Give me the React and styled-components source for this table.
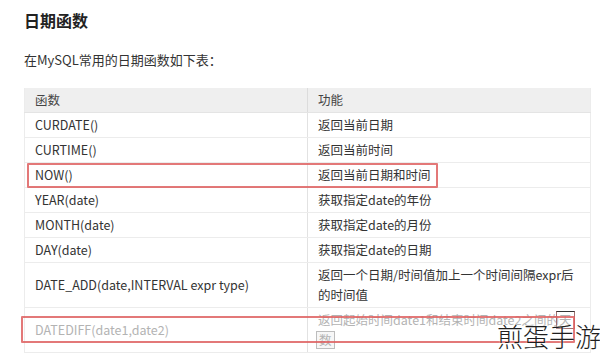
import React from "react"
import styled, { createGlobalStyle } from "styled-components"

const GlobalStyle = createGlobalStyle`
  html, body {
    margin: 0;
    padding: 0;
    background: #fff;
  }
  body {
    font-family: "Noto Sans CJK SC", "Noto Sans", sans-serif;
    color: #333;
  }
`

const Page = styled.div`
  position: relative;
  width: 600px;
  height: 359px;
  overflow: hidden;
  padding: 8px 9px 0 24px;
  box-sizing: border-box;
`

const Title = styled.h2`
  margin: 0;
  font-size: 16px;
  line-height: 24px;
  font-weight: 700;
  color: #222;
`

const Intro = styled.p`
  margin: 18px 0 0;
  font-size: 13px;
  line-height: 20px;
  color: #333;
`

const TableWrap = styled.div`
  position: relative;
  margin-top: 18px;
`

const Table = styled.table`
  width: 567px;
  border-collapse: collapse;
  table-layout: fixed;
  font-size: 12.5px;
  border-left: 1px solid #ececec;
  border-right: 1px solid #ececec;
`

const Th = styled.th`
  background: #efefef;
  font-weight: 400;
  text-align: left;
  padding: 2px 10px;
  line-height: 20px;
  height: 20px;
  border-bottom: 1px solid #e4e4e4;
  border-left: ${(p) => (p.$divider ? "1px solid #dcdcdc" : "none")};
  color: #444;
`

const Td = styled.td`
  padding: 2px 10px;
  line-height: 20px;
  border-bottom: 1px solid #ececec;
  border-left: ${(p) => (p.$divider ? "1px solid #e2e2e2" : "none")};
  color: ${(p) => (p.$faded ? "#b3b3b3" : "#333")};
  vertical-align: middle;
`

const Boxed = styled.span`
  display: inline-block;
  line-height: 16px;
  padding: 0 2px;
  margin-left: ${(p) => (p.$flush ? "-2px" : "-3px")};
  border: 1px solid ${(p) => (p.$dark ? "#a07070" : "#bdbdbd")};
  border-top-color: ${(p) => (p.$dark ? "#333" : "#bdbdbd")};
  background: ${(p) => (p.$dark ? "transparent" : "#f7f7f7")};
`

const Mark = styled.div`
  position: absolute;
  left: ${(p) => p.$x}px;
  top: ${(p) => p.$y}px;
  width: ${(p) => p.$w}px;
  height: ${(p) => p.$h}px;
  border: 2px solid rgba(222, 96, 96, 0.85);
  border-radius: 1px;
  box-sizing: border-box;
  pointer-events: none;
`

const Watermark = styled.div`
  position: absolute;
  left: 497px;
  top: 318px;
  font-family: "Noto Sans CJK SC", sans-serif;
  font-size: 26px;
  font-weight: 300;
  line-height: 36px;
  color: #1e1e1e;
  white-space: nowrap;
  text-shadow: 0 0 2px #fff;
`

const rows = [
  ["CURDATE()", "返回当前日期"],
  ["CURTIME()", "返回当前时间"],
  ["NOW()", "返回当前日期和时间"],
  ["YEAR(date)", "获取指定date的年份"],
  ["MONTH(date)", "获取指定date的月份"],
  ["DAY(date)", "获取指定date的日期"],
  ["DATE_ADD(date,INTERVAL expr type)", "返回一个日期/时间值加上一个时间间隔expr后的时间值"],
]

export default function App() {
  return (
    <>
      <GlobalStyle />
      <Page>
        <Title>日期函数</Title>
        <Intro>在MySQL常用的日期函数如下表：</Intro>
        <TableWrap>
          <Table>
            <colgroup>
              <col style={{ width: 283 }} />
              <col />
            </colgroup>
            <thead>
              <tr>
                <Th>函数</Th>
                <Th $divider>功能</Th>
              </tr>
            </thead>
            <tbody>
              {rows.map(([fn, desc]) => (
                <tr key={fn}>
                  <Td>{fn}</Td>
                  <Td $divider>{desc}</Td>
                </tr>
              ))}
              <tr>
                <Td $faded>DATEDIFF(date1,date2)</Td>
                <Td $divider $faded>
                  返回起始时间date1和结束时间date2之间的<Boxed $dark>天</Boxed>
                  <br />
                  <Boxed $flush>数</Boxed>
                </Td>
              </tr>
            </tbody>
          </Table>
          <Mark $x={3} $y={75} $w={411} $h={25} />
          <Mark $x={-3} $y={228} $w={554} $h={27} />
        </TableWrap>
        <Watermark>煎蛋手游</Watermark>
      </Page>
    </>
  )
}
